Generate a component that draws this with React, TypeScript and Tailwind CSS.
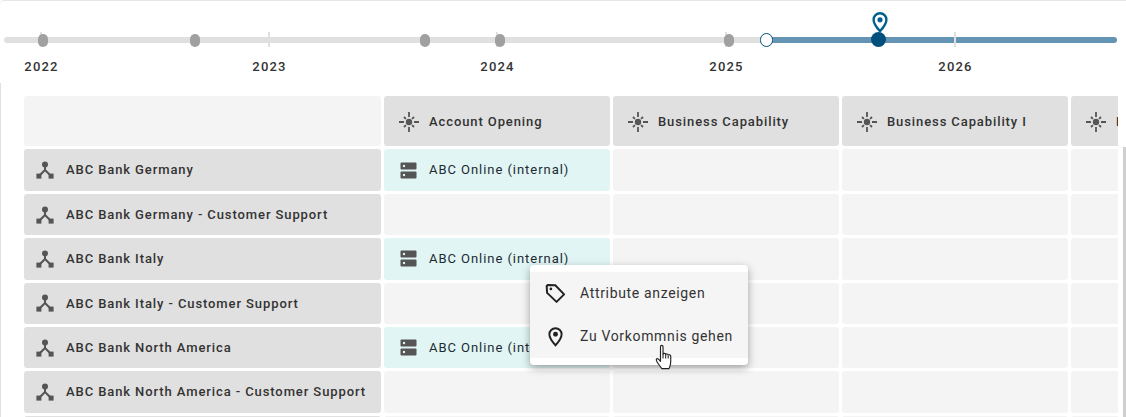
import React from "react";

const Spark = () => (
  <svg width="22" height="22" viewBox="0 0 22 22" className="shrink-0" stroke="#555" strokeWidth="1.8" fill="none">
    <circle cx="11" cy="11" r="3.2" fill="#555" stroke="none" />
    <path d="M11 1v5M11 16v5M1 11h5M16 11h5M6 6l1.9 1.9M14.1 14.1 16 16M16 6l-1.9 1.9M7.9 14.1 6 16" />
  </svg>
);

const Hub = () => (
  <svg width="18" height="18" viewBox="0 0 18 18" className="shrink-0" fill="#555">
    <circle cx="9" cy="3.4" r="3" />
    <rect x="0.4" y="12.6" width="5" height="5" />
    <rect x="12.6" y="12.6" width="5" height="5" />
    <path d="M9 5v4.5M9 9l-5.5 5.5M9 9l5.5 5.5" stroke="#555" strokeWidth="2" fill="none" />
  </svg>
);

const Server = () => (
  <svg width="17" height="17" viewBox="0 0 17 17" className="shrink-0">
    <rect x="0.5" y="0.5" width="16" height="7" rx="1" fill="#555" />
    <rect x="0.5" y="9.5" width="16" height="7" rx="1" fill="#555" />
    <circle cx="4" cy="4" r="1.2" fill="#e1f5f4" />
    <circle cx="4" cy="13" r="1.2" fill="#e1f5f4" />
  </svg>
);

const Pin = ({ size, color, w = 2 }: { size: number; color: string; w?: number }) => (
  <svg width={size} height={size} viewBox="0 0 24 24" fill="none" className="shrink-0">
    <path d="M12 2.5c-3.9 0-7 3.1-7 7 0 5 7 12.5 7 12.5s7-7.5 7-12.5c0-3.9-3.1-7-7-7Z" stroke={color} strokeWidth={w} />
    <circle cx="12" cy="9.5" r="2.8" fill={color} />
  </svg>
);

const Tag = () => (
  <svg width="21" height="21" viewBox="0 0 20 20" fill="none" stroke="#222" strokeWidth="1.9" strokeLinejoin="round" className="shrink-0">
    <path d="M1.6 2.8 2.6 1.8 9.8 2.2 18.2 10.8 11 18 2 9.4Z" />
    <circle cx="5.6" cy="5.6" r="1.3" fill="#222" stroke="none" />
  </svg>
);

const Hand = () => (
  <svg width="19" height="26" viewBox="0 0 18 24">
    <path
      d="M5.2 2.2c0-1.6 2.4-1.6 2.4 0v7c.3-.9 2.4-.9 2.5.4.4-.8 2.3-.7 2.4.6.6-.6 2.4-.4 2.4 1.2v5.4c0 2.7-1.4 5.6-1.6 6.2H6.4c-.6-1.2-2.3-3-4.1-5.8-.9-1.4-1.5-2.6-.8-3.3.8-.8 2 0 3.7 2.2Z"
      fill="#fff"
      stroke="#222"
      strokeWidth="1.1"
      strokeLinejoin="round"
    />
    <path d="M7.6 9.2v4.3M10.1 9.9v3.6M12.5 10.9v2.6" stroke="#222" strokeWidth="1" fill="none" />
  </svg>
);

const years = ["2022", "2023", "2024", "2025", "2026"];
const columns = ["Account Opening", "Business Capability", "Business Capability I", "Business Capability II"];
const rows: [string, boolean][] = [
  ["ABC Bank Germany", true],
  ["ABC Bank Germany - Customer Support", false],
  ["ABC Bank Italy", true],
  ["ABC Bank Italy - Customer Support", false],
  ["ABC Bank North America", true],
  ["ABC Bank North America - Customer Support", false],
  ["", false],
];

const ticks = [41, 269, 497, 726, 955];
const dots = [43, 195, 424.5, 500, 729];

export default function App() {
  return (
    <div className="relative h-[417px] w-[1126px] overflow-hidden bg-white font-['Roboto',sans-serif] text-[#333]">
      <section className="relative h-[83px] rounded-tl-[4px] border-t border-[#e6e6e6]">
        <div className="absolute left-[4px] top-[36px] h-[6px] w-[764px] rounded-l-full bg-[#e0e0e0]" />
        <div className="absolute left-[767px] top-[36px] h-[6px] w-[350px] rounded-r-full bg-[#6593b3]" />
        {ticks.map((x) => (
          <div key={x} className="absolute top-[31px] h-[15px] w-[2px] bg-[#e0e0e0]" style={{ left: x - 1 }} />
        ))}
        {dots.map((x) => (
          <div key={x} className="absolute top-[33px] h-[13px] w-[10px] rounded-full bg-[#a0a0a0]" style={{ left: x - 5 }} />
        ))}
        <div className="absolute left-[760px] top-[32px] h-[14px] w-[13px] rounded-full border-[1.5px] border-[#004f7c] bg-white" />
        <div className="absolute left-[871px] top-[31px] h-[15px] w-[15px] rounded-full bg-[#004f7c]" />
        <div className="absolute left-[869px] top-[10px]">
          <Pin size={22} color="#005f8f" w={2.6} />
        </div>
        {years.map((y, i) => (
          <span
            key={y}
            className="absolute top-[58px] w-[60px] -translate-x-1/2 text-center text-[13px] font-medium leading-[15px] tracking-[1.2px]"
            style={{ left: ticks[i] + 0.5 }}
          >
            {y}
          </span>
        ))}
      </section>

      <main className="h-[334px] overflow-hidden border-l border-[#e0e0e0] pl-[23px] pt-[13px]">
        <div className="w-[1094px] overflow-hidden">
          <div className="grid grid-cols-[357px_226px_226px_226px_226px] grid-rows-[50.45px] auto-rows-[41.4px] gap-[3px] text-[13px] tracking-[0.9px]">
            <div className="rounded-[3px] bg-[#f4f4f4]" />
            {columns.map((c) => (
              <div key={c} className="flex items-center gap-[9px] overflow-hidden whitespace-nowrap rounded-[3px] bg-[#e0e0e0] pl-[14px] pt-[1px] font-medium">
                <Spark />
                <span>{c}</span>
              </div>
            ))}
            {rows.map(([name, online], i) => (
              <React.Fragment key={i}>
                <div className="flex items-center gap-[12px] whitespace-nowrap rounded-[3px] bg-[#e0e0e0] pl-[12px] font-medium">
                  {name && <Hub />}
                  {name && <span>{name}</span>}
                </div>
                {online ? (
                  <div className="flex items-center gap-[12px] whitespace-nowrap rounded-[3px] bg-[#e1f5f4] pl-[16px] tracking-[0.95px] text-[#1c2b33]">
                    <Server />
                    <span>ABC Online (internal)</span>
                  </div>
                ) : (
                  <div className="rounded-[3px] bg-[#f4f4f4]" />
                )}
                <div className="rounded-[3px] bg-[#f4f4f4]" />
                <div className="rounded-[3px] bg-[#f4f4f4]" />
                <div className="rounded-[3px] bg-[#f4f4f4]" />
              </React.Fragment>
            ))}
          </div>
        </div>
      </main>

      <div className="absolute right-0 top-[147px] h-[270px] w-[3px] bg-[#cfcfcf]" />

      <div className="absolute left-[530px] top-[265px] w-[218px] rounded-[4px] bg-white py-[7px] shadow-[0_3px_9px_rgba(0,0,0,0.35)]">
        <div className="flex h-[43px] items-center gap-[14px] bg-[#f5f5f5] pl-[15px] text-[14px] tracking-[0.66px] text-[#333]">
          <Tag />
          <span>Attribute anzeigen</span>
        </div>
        <div className="flex h-[43px] items-center gap-[14px] bg-[#f5f5f5] pl-[15px] text-[14px] tracking-[0.66px] text-[#333]">
          <Pin size={21} color="#222" w={2.2} />
          <span>Zu Vorkommnis gehen</span>
        </div>
      </div>
      <div className="absolute left-[655px] top-[344px]">
        <Hand />
      </div>
    </div>
  );
}
